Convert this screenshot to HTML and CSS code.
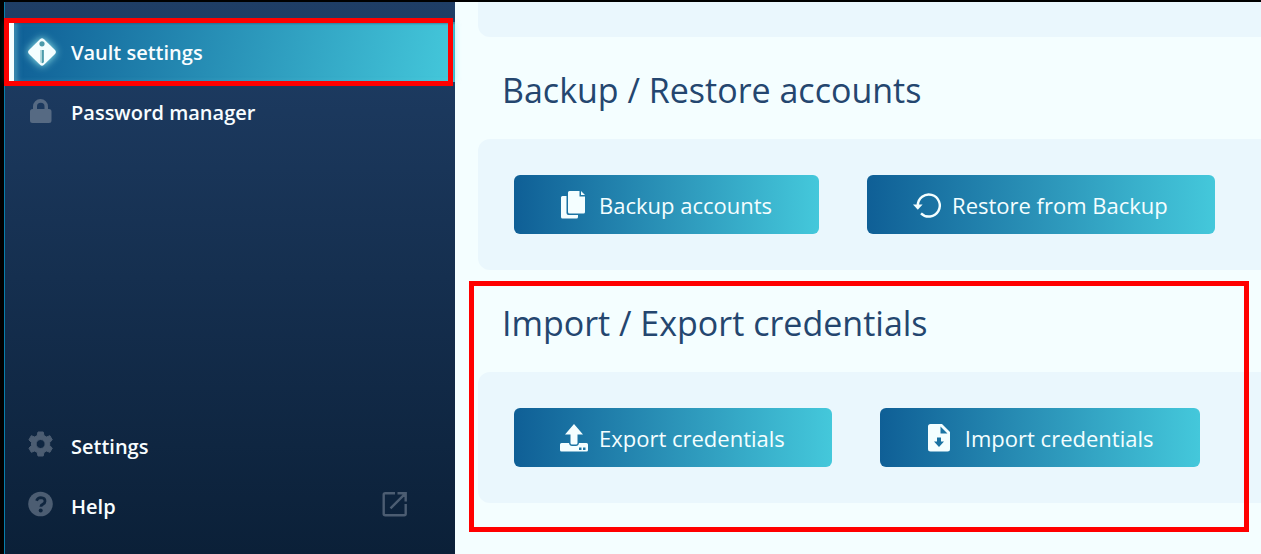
FILE: index.html
```html
<!DOCTYPE html>
<html lang="en">
<head>
<meta charset="utf-8">
<title>Vault settings</title>
<link rel="stylesheet" href="styles.css">
</head>
<body>
<div class="app">
  <nav class="sidebar">
    <div class="nav-group">
      <a class="nav-item active" href="#vault" aria-current="page">
        <svg class="nav-icon glow" viewBox="0 0 30 30"><path fill="#f4feff" d="M13 2.200q2-1.800 4 0l11 10.800q1.800 2 0 4l-11 10.800q-2 1.800-4 0L2 17q-1.800-2 0-4z"/><circle cx="15" cy="6.800" r="2.600" fill="#4d9bab"/><path fill="#a9d3d8" d="M13.200 13h3.600v11.500q0 1.800-1.800 1.800t-1.800-1.800z"/><path fill="#4d9bab" d="M15 13h1.800v11.500q0 1.800-1.800 1.800z"/></svg>
        <span>Vault settings</span>
      </a>
      <a class="nav-item" href="#passwords">
        <svg class="nav-icon" viewBox="0 0 30 30"><path fill="#566a83" fill-rule="evenodd" d="M6 12V9.500a7.500 7.500 0 0 1 15 0V12h1q2.500 0 2.500 2.500v9q0 2.500-2.500 2.500H5.500Q3 26 3 23.500v-9Q3 12 5.500 12zm4 0h7.500V9.500a3.700 3.700 0 0 0-7.500 0z"/></svg>
        <span>Password manager</span>
      </a>
    </div>
    <div class="nav-group">
      <a class="nav-item" href="#settings">
        <svg class="nav-icon" viewBox="0 0 30 30"><path fill="#4c5d72" stroke="#4c5d72" stroke-width="1" stroke-linejoin="round" fill-rule="evenodd" d="M11 1h5.200l.8 3.600 2.500 1.400 3.400-1.300 2.400 4.200-2.600 2.500v3.200l2.600 2.500-2.400 4.200-3.400-1.300-2.500 1.400-.8 3.600H11l-.8-3.600-2.500-1.400-3.400 1.300-2.400-4.200 2.600-2.500v-3.200L1.900 8.900l2.400-4.200L7.700 6l2.500-1.400zM13.600 8.500a4.500 4.500 0 1 0 0 9 4.500 4.500 0 0 0 0-9z"/></svg>
        <span>Settings</span>
      </a>
      <a class="nav-item" href="#help">
        <svg class="nav-icon" viewBox="0 0 30 30"><circle cx="13.500" cy="13" r="12.300" fill="#4c5d72"/><path d="M9.500 9.700q1.300-3 4.300-3 4.200.2 4.200 3.500 0 1.900-2.200 3.100-1.900 1-1.900 2.500" fill="none" stroke="#10263f" stroke-width="2.800"/><circle cx="13.700" cy="19.400" r="2" fill="#10263f"/></svg>
        <span>Help</span>
        <svg class="external" viewBox="0 0 26 30"><path d="M13 2.200H3.200q-1.500 0-1.500 1.500v19q0 1.500 1.500 1.500h19q1.500 0 1.500-1.500V13M15.500 2.200h8.200v8.200M23.500 2.400L8.500 17.400" fill="none" stroke="#4c5d72" stroke-width="2.400"/></svg>
      </a>
    </div>
    <div class="highlight"></div>
  </nav>
  <main class="content">
    <div class="card card-end"></div>
    <section>
      <h2>Backup / Restore accounts</h2>
      <div class="card">
        <button class="btn" type="button">
          <svg class="btn-icon" viewBox="0 0 28 28"><path fill="#f4feff" d="M8.500 0h10v5.500H24V21q0 1.500-1.500 1.500h-14Q7 22.500 7 21V1.500Q7 0 8.500 0zM20 0l4 4h-4zM1.500 5H5.500v17q0 2 2 2H17v2q0 1.500-1.500 1.500h-14Q0 27.500 0 26V6.500Q0 5 1.500 5z"/></svg>
          <span>Backup accounts</span>
        </button>
        <button class="btn" type="button">
          <svg class="btn-icon" viewBox="0 0 28 28"><path fill="none" stroke="#f4feff" stroke-width="2.400" d="M3.800 14.500A11 11 0 1 1 7 22.300"/><path fill="#f4feff" d="M-1 13.500h9.600L3.800 18.800z"/></svg>
          <span>Restore from Backup</span>
        </button>
      </div>
    </section>
    <section class="marked">
      <h2>Import / Export credentials</h2>
      <div class="card">
        <button class="btn" type="button">
          <svg class="btn-icon" viewBox="0 0 28 28"><path fill="#f4feff" fill-rule="evenodd" d="M13 0l9 10.500h-5.500V19q0 1.500-1.500 1.500h-4q-1.500 0-1.500-1.500v-8.500H4zM.500 19H8q.5 3 3 3h4q2.500 0 3-3h7.500q1.500 0 1.500 1.500V26q0 1.500-1.500 1.500h-25Q-1 27.500-1 26v-5.500Q-1 19 .500 19zM18 23.500V26h2.500v-2.500zm4 0V26h2.500v-2.500z"/></svg>
          <span>Export credentials</span>
        </button>
        <button class="btn" type="button">
          <svg class="btn-icon" viewBox="0 0 28 28"><path fill="#f4feff" fill-rule="evenodd" d="M3.500 0H15l8 8v17q0 2.500-2.500 2.500h-17Q1 27.500 1 25V2.500Q1 0 3.500 0zM13.500 2.500v7h7zM10 13.500v4H7L12 23l5-5.500h-3v-4z"/></svg>
          <span>Import credentials</span>
        </button>
      </div>
      <div class="highlight highlight-section"></div>
    </section>
  </main>
</div>
</body>
</html>
```
FILE: styles.css
```css
* { box-sizing: border-box; }

body {
  margin: 0;
  background: #000;
  font-family: "Segoe UI", "Open Sans", sans-serif;
}

.app {
  display: flex;
  min-height: 100vh;
  padding: 2px 0 0 4px;
}

.sidebar {
  position: relative;
  display: flex;
  flex-direction: column;
  justify-content: space-between;
  flex: 0 0 451px;
  padding: 20px 0 18px;
  border-left: 1px solid #087eab;
  background: linear-gradient(#1f3e66, #0b2038);
}

.nav-item {
  display: flex;
  align-items: center;
  gap: 14px;
  height: 60px;
  padding: 0 47px 0 22px;
  color: #f8fdff;
  font-size: 20px;
  font-weight: 600;
  text-decoration: none;
}

.nav-item.active {
  padding-left: 13px;
  border-left: 9px solid #f4feff;
  background: linear-gradient(100deg, #0f5f96, #44c8db);
  box-shadow: inset 0 2px 2px #1b355866, inset 4px 0 6px -2px #8ce0e688, 0 0 6px #44c8db44;
}

.nav-icon { width: 30px; height: 30px; }

.glow { filter: drop-shadow(0 0 4px #9ff3f0); }

.external {
  width: 26px;
  height: 30px;
  margin-left: auto;
}

.highlight {
  position: absolute;
  top: 16px;
  left: -1px;
  right: 2px;
  height: 68px;
  border: 5px solid #f00;
  pointer-events: none;
}

.content {
  flex: 1;
  min-width: 0;
  padding-left: 23px;
  background: #f4feff;
}

h2 {
  margin: 0;
  padding: 4px 24px 0;
  color: #24466f;
  font-size: 34px;
  font-weight: 400;
  line-height: 98px;
}

.card {
  display: flex;
  gap: 48px;
  padding: 36px;
  border-radius: 12px 0 0 12px;
  background: #eaf7fd;
}

.card-end {
  height: 35px;
  padding: 0;
  border-radius: 0 0 0 12px;
}

.marked { position: relative; }

.highlight-section {
  top: 11px;
  left: -9px;
  right: 12px;
  height: 251px;
}

.btn {
  display: flex;
  align-items: center;
  gap: 10px;
  height: 59px;
  padding: 0 47px;
  border: 0;
  border-radius: 6px;
  background: linear-gradient(90deg, #0f5f96, #2b93b8 50%, #44c8db);
  color: #f4feff;
  font: inherit;
  font-size: 22px;
  white-space: nowrap;
}

.btn-icon { width: 28px; height: 28px; overflow: visible; }
```
